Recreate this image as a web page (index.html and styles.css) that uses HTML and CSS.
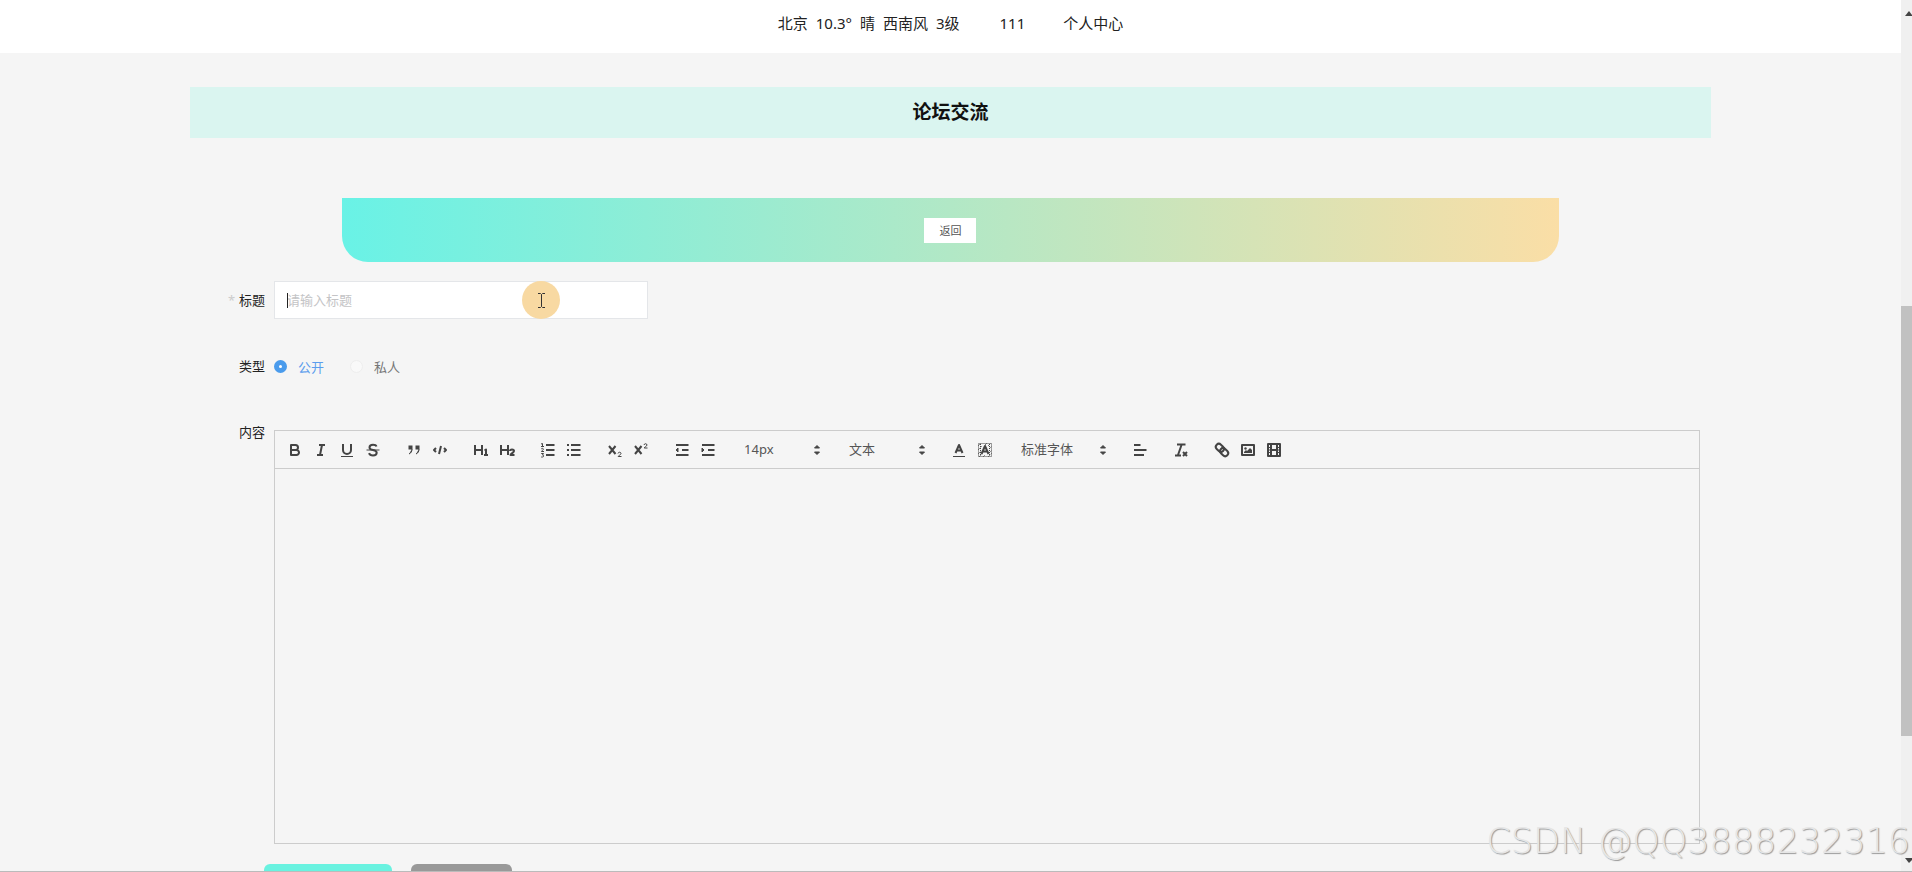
FILE: index.html
```html
<!DOCTYPE html>
<html lang="zh-CN">

<head>
  <meta charset="UTF-8">
  <meta name="viewport" content="width=device-width, initial-scale=1.0">
  <title>论坛交流</title>
  <link rel="stylesheet" href="styles.css">
</head>

<body>
  <div class="app">
    <div class="page">
      <header class="top-nav">
        <div class="weather">
          <span>北京</span>
          <span>10.3°</span>
          <span>晴</span>
          <span>西南风</span>
          <span>3级</span>
        </div>
        <a href="#" class="user-name">111</a>
        <a href="#" class="user-center">个人中心</a>
      </header>

      <main class="content">
        <h1 class="page-title">论坛交流</h1>

        <div class="back-bar">
          <button type="button" class="back-btn">返回</button>
        </div>

        <form class="post-form">
          <div class="form-row">
            <label class="form-label required" for="title">标题</label>
            <div class="title-field">
              <input type="text" id="title" class="title-input" placeholder="请输入标题">
              <span class="caret"></span>
              <span class="pointer">
                <svg width="9" height="17" viewBox="0 0 9 17"><path d="M1 1.500H3.500L4.500 2.500L5.500 1.500H8M4.500 2.500V14.500M1 15.500H3.500L4.500 14.500L5.500 15.500H8" fill="none" stroke="#333"/></svg>
              </span>
            </div>
          </div>

          <div class="form-row" role="radiogroup" aria-labelledby="typeLabel">
            <span class="form-label" id="typeLabel">类型</span>
            <label class="radio"><input type="radio" name="type" checked><span>公开</span></label>
            <label class="radio"><input type="radio" name="type"><span>私人</span></label>
          </div>

          <div class="form-row editor-row">
            <label class="form-label" for="content">内容</label>
            <div class="editor">
              <div class="toolbar">
                <div class="tools">
                  <button type="button" aria-label="粗体"><svg viewBox="0 0 18 18"><path class="line" d="M5 4H9.500A2.500 2.500 0 0 1 12 6.500A2.500 2.500 0 0 1 9.500 9H5ZM5 9H10.500A2.500 2.500 0 0 1 13 11.500A2.500 2.500 0 0 1 10.500 14H5Z"/></svg></button>
                  <button type="button" aria-label="斜体"><svg viewBox="0 0 18 18"><path class="line" d="M7 4H13M5 14H11M8 14L10 4"/></svg></button>
                  <button type="button" aria-label="下划线"><svg viewBox="0 0 18 18"><path class="line" d="M5 3V9A4 4 0 0 0 9 13A4 4 0 0 0 13 9V3"/><rect class="fill" x="3" y="15" width="12" height="1"/></svg></button>
                  <button type="button" aria-label="删除线"><svg viewBox="0 0 18 18"><path class="thin" d="M2.500 9H15.500"/><path class="line" d="M12.500 5.500C12 4.200 10.700 3.700 9 3.700C7 3.700 5.500 4.700 5.500 6.400C5.500 8 7 8.600 9 9C11.500 9.500 12.700 10.200 12.700 11.800C12.700 13.500 11 14.400 9 14.400C7 14.400 5.500 13.600 5 12.200"/></svg></button>
                </div>
                <div class="tools">
                  <button type="button" aria-label="引用"><svg viewBox="0 0 18 18"><rect class="solid" x="4" y="5" width="3" height="3"/><rect class="solid" x="11" y="5" width="3" height="3"/><path class="solid" d="M7 8C7 10.500 6 12 4 13M14 8C14 10.500 13 12 11 13"/></svg></button>
                  <button type="button" aria-label="代码"><svg viewBox="0 0 18 18"><path class="line" d="M5 7L3 9L5 11M13 7L15 9L13 11M10 5L8 13"/></svg></button>
                </div>
                <div class="tools">
                  <button type="button" aria-label="标题 1"><svg viewBox="0 0 18 18"><path class="line" d="M3 4V14M3 9H10M10 4V14M12 14H16M14 14V8.500L12.500 9.500"/></svg></button>
                  <button type="button" aria-label="标题 2"><svg viewBox="0 0 18 18"><path class="line" d="M3 4V14M3 9H10M10 4V14M12 10C12 8 16 8 16 10C16 11.500 12.500 13 12.500 14H16.500"/></svg></button>
                </div>
                <div class="tools">
                  <button type="button" aria-label="有序列表"><svg viewBox="0 0 18 18"><path class="line" d="M7 4H15.500M7 9H15.500M7 14H15.500"/><path class="thin" d="M2 3L3.500 2.500V5.500M2 5.500H5M2.200 8C3 7 4.500 7.300 4.400 8.300C4.300 9.200 2.500 9.500 2.500 10.500H5M2.200 12.500H4.500L3.500 14C5 14 5 16 3.500 16H2.200"/></svg></button>
                  <button type="button" aria-label="无序列表"><svg viewBox="0 0 18 18"><path class="line" d="M6 4H15.500M6 9H15.500M6 14H15.500M2 4H4M2 9H4M2 14H4"/></svg></button>
                </div>
                <div class="tools">
                  <button type="button" aria-label="下标"><svg viewBox="0 0 18 18"><path class="line" d="M3 5L9.500 13M9.500 5L3 13"/><path class="thin" d="M12 12.500C12.200 10.800 15 10.800 15 12.500C15 13.800 12.300 14.500 12.200 15.500H15.500"/></svg></button>
                  <button type="button" aria-label="上标"><svg viewBox="0 0 18 18"><path class="line" d="M3 5L9.500 13M9.500 5L3 13"/><path class="thin" d="M12 4C12.200 2.300 15 2.300 15 4C15 5.300 12.300 6 12.200 7H15.500"/></svg></button>
                </div>
                <div class="tools">
                  <button type="button" aria-label="减少缩进"><svg viewBox="0 0 18 18"><path class="line" d="M3 4H15.500M3 14H15.500M9 9H15.500"/><path class="solid" d="M5 7V11L3 9Z"/></svg></button>
                  <button type="button" aria-label="增加缩进"><svg viewBox="0 0 18 18"><path class="line" d="M3 4H15.500M3 14H15.500M9 9H15.500"/><path class="solid" d="M3 7V11L5 9Z"/></svg></button>
                </div>
                <div class="picker">
                  <select aria-label="字号"><option>14px</option><option>16px</option><option>18px</option></select>
                  <svg viewBox="0 0 18 18"><path class="solid" d="M6.500 11L9 13.500L11.500 11ZM6.500 7L9 4.500L11.500 7Z"/></svg>
                </div>
                <div class="picker">
                  <select aria-label="段落"><option>文本</option><option>标题1</option><option>标题2</option></select>
                  <svg viewBox="0 0 18 18"><path class="solid" d="M6.500 11L9 13.500L11.500 11ZM6.500 7L9 4.500L11.500 7Z"/></svg>
                </div>
                <div class="tools">
                  <button type="button" aria-label="文字颜色"><svg viewBox="0 0 18 18"><path class="thin" d="M3 15.500H15"/><path class="line" d="M5.500 12L9 4L12.500 12M6.500 9.500H11.500"/></svg></button>
                  <button type="button" aria-label="背景颜色"><svg viewBox="0 0 18 18"><rect class="hatch" x="2.500" y="2.500" width="13" height="13"/><path class="hatch" d="M2 5L5 2M2 9L6 5M2 13L5 10M3 16L6 13M9 4L11 2M12 5L15 2M13 8L16 5M13 12L16 9M12 16L16 12M7 16L9 14M4.500 3V15M13.500 3V15"/><path class="line" d="M5.500 13L9 5L12.500 13M6.500 10.500H11.500"/></svg></button>
                </div>
                <div class="picker picker-font">
                  <select aria-label="字体"><option>标准字体</option><option>衬线字体</option><option>等宽字体</option></select>
                  <svg viewBox="0 0 18 18"><path class="solid" d="M6.500 11L9 13.500L11.500 11ZM6.500 7L9 4.500L11.500 7Z"/></svg>
                </div>
                <div class="tools">
                  <button type="button" aria-label="对齐"><svg viewBox="0 0 18 18"><path class="line" d="M3 9H15.500M3 14H13M3 4H9.500"/></svg></button>
                </div>
                <div class="tools">
                  <button type="button" aria-label="清除格式"><svg viewBox="0 0 18 18"><path class="line" d="M5 3.500H13.500M6 14L9.500 4M3 14.500H9M11 11L15 15M15 11L11 15"/></svg></button>
                </div>
                <div class="tools">
                  <button type="button" aria-label="链接"><svg viewBox="0 0 18 18"><g transform="rotate(45 9 9)"><rect class="line" x="1.500" y="6" width="9" height="6" rx="3"/><rect class="line" x="7.500" y="6" width="9" height="6" rx="3"/></g></svg></button>
                  <button type="button" aria-label="图片"><svg viewBox="0 0 18 18"><rect class="line" x="3" y="4" width="12" height="10"/><circle class="fill" cx="6.500" cy="7.500" r="1.200"/><path class="fill" d="M5 12V11L7 9L8 10L11 7L13 9V12Z"/></svg></button>
                  <button type="button" aria-label="视频"><svg viewBox="0 0 18 18"><rect class="line" x="3" y="3" width="12" height="12"/><path class="line" d="M6 3V15M12 3V15M6 9H12"/><path class="thin" d="M3 6.500H6M3 9H6M3 11.500H6M12 6.500H15M12 9H15M12 11.500H15"/></svg></button>
                </div>
              </div>
              <textarea id="content" class="editor-area"></textarea>
            </div>
          </div>

          <div class="form-actions">
            <button type="submit" class="submit-btn" aria-label="提交"></button>
            <button type="reset" class="cancel-btn" aria-label="取消"></button>
          </div>
        </form>
      </main>
    </div>

    <div class="scrollbar">
      <svg class="scroll-up" viewBox="0 0 7 5"><path d="M0 5L4 0L7 4V5Z"/></svg>
      <div class="scroll-thumb"></div>
      <svg class="scroll-down" viewBox="0 0 7 5"><path d="M0 0H7V2L4 5Z"/></svg>
    </div>

    <div class="watermark">CSDN @QQ3888232316</div>
  </div>
</body>

</html>
```
FILE: styles.css
```css
* {
  box-sizing: border-box;
}

body {
  margin: 0;
  font-family: "Noto Sans", "Noto Sans CJK SC", sans-serif;
  font-size: 13px;
  color: #222;
  background-color: #f5f5f5;
}

button,
input,
select,
textarea {
  font-family: inherit;
}

.app {
  position: relative;
  display: flex;
  height: 100vh;
  overflow: hidden;
  border-bottom: 1px solid #bbb;
}

.page {
  flex: 1;
  min-width: 0;
}

/* header */
.top-nav {
  display: flex;
  justify-content: center;
  padding: 11px 0 18px;
  font-size: 15px;
  line-height: 24px;
  background-color: #fff;
}

.weather {
  display: flex;
  gap: 8px;
  margin-right: 40px;
}

.top-nav a {
  color: #222;
  text-decoration: none;
}

.user-name {
  margin-right: 38px;
}

.content {
  width: 80%;
  margin: 0 auto;
}

.page-title {
  margin: 34px 0 60px;
  font-size: 19px;
  line-height: 51px;
  text-align: center;
  color: #111;
  background-color: #daf5f0;
}

.back-bar {
  display: flex;
  justify-content: center;
  align-items: center;
  width: 80%;
  height: 64px;
  margin: 0 auto 19px;
  border-radius: 0 0 26px 26px;
  background: linear-gradient(90deg, #69f2e6, #fadea6);
}

.back-btn {
  padding: 0 15px;
  border: none;
  font-size: 11px;
  line-height: 25px;
  color: #555;
  background-color: #fff;
}

/* form */
.post-form {
  padding-right: 11px;
}

.form-row {
  display: flex;
  align-items: center;
  margin-bottom: 28px;
}

.form-label {
  flex: none;
  width: 84px;
  padding-right: 9px;
  line-height: 38px;
  text-align: right;
}

.required::before {
  content: "*";
  margin-right: 4px;
  color: #ccc;
}

.title-field {
  position: relative;
  width: 374px;
  overflow: hidden;
}

.title-input {
  display: block;
  width: 100%;
  height: 38px;
  padding: 0 12px;
  border: 1px solid #e4e6e9;
  font-size: 13px;
  background-color: #fff;
  outline: none;
}

.title-input::placeholder {
  color: #c4c4c6;
}

.caret {
  position: absolute;
  top: 12px;
  left: 13px;
  width: 1px;
  height: 15px;
  background-color: #222;
}

.pointer {
  position: absolute;
  top: 0;
  left: 248px;
  display: flex;
  justify-content: center;
  align-items: center;
  width: 38px;
  height: 38px;
  border-radius: 50%;
  background-color: #f8d9a2;
}

.radio {
  display: flex;
  align-items: center;
  gap: 11px;
  margin-right: 26px;
  color: #777;
}

.radio input {
  appearance: none;
  width: 13px;
  height: 13px;
  margin: 0;
  border: 1px solid #eee;
  border-radius: 50%;
  background-color: #f9f9f9;
}

.radio input:checked {
  border: 5px solid #4a9bec;
  background-color: #fff;
}

.radio input:checked + span {
  color: #5c9ded;
}

.editor-row {
  align-items: flex-start;
  margin-bottom: 20px;
}

/* editor */
.editor {
  flex: 1;
  min-width: 0;
  margin-top: 17px;
  border: 1px solid #ccc;
}

.toolbar {
  display: flex;
  flex-wrap: wrap;
  gap: 15px;
  padding: 6px 7px 5px;
  border-bottom: 1px solid #ccc;
}

.tools {
  display: flex;
}

.tools button {
  width: 26px;
  height: 26px;
  padding: 4px;
  border: none;
  background: none;
}

.toolbar svg {
  display: block;
  width: 18px;
  height: 18px;
}

.line,
.thin,
.hatch {
  fill: none;
  stroke: #444;
  stroke-width: 2;
  stroke-linejoin: round;
}

.thin {
  stroke-width: 1;
}

.hatch {
  stroke-width: 1;
  stroke-dasharray: 1 1;
}

.fill {
  fill: #444;
}

.solid {
  fill: #444;
  stroke: #444;
  stroke-width: 1;
}

.picker {
  display: flex;
  align-items: center;
  width: 90px;
}

.picker-font {
  width: 99px;
}

.picker select {
  flex: 1;
  min-width: 0;
  height: 24px;
  padding: 0 0 2px 8px;
  border: none;
  font-size: 13px;
  color: #555;
  background: none;
  appearance: none;
}

.editor-area {
  display: block;
  width: 100%;
  height: 374px;
  padding: 12px 15px;
  border: none;
  font-size: 14px;
  background: none;
  resize: none;
  outline: none;
}

.form-actions {
  display: flex;
  gap: 19px;
  padding-left: 74px;
}

.form-actions button {
  height: 40px;
  border: none;
  border-radius: 6px;
}

.submit-btn {
  width: 128px;
  background-color: #69f2e0;
}

.cancel-btn {
  width: 101px;
  background-color: #999;
}

/* scrollbar */
.scrollbar {
  display: flex;
  flex-direction: column;
  align-items: flex-end;
  width: 11px;
  padding: 11px 0 8px;
  background-color: #f0f0f0;
}

.scrollbar svg {
  width: 7px;
  height: 5px;
  fill: #444;
}

.scroll-thumb {
  width: 100%;
  height: calc(50% + 4px);
  margin-top: 290px;
  background-color: #c1c1c1;
}

.scroll-down {
  margin-top: auto;
}

.watermark {
  position: absolute;
  right: 2px;
  bottom: 10px;
  font-family: "DejaVu Sans", sans-serif;
  font-size: 35px;
  font-weight: 200;
  line-height: 40px;
  color: #e6e6e6;
  text-shadow: 1px 1px 1px #999;
}
```
